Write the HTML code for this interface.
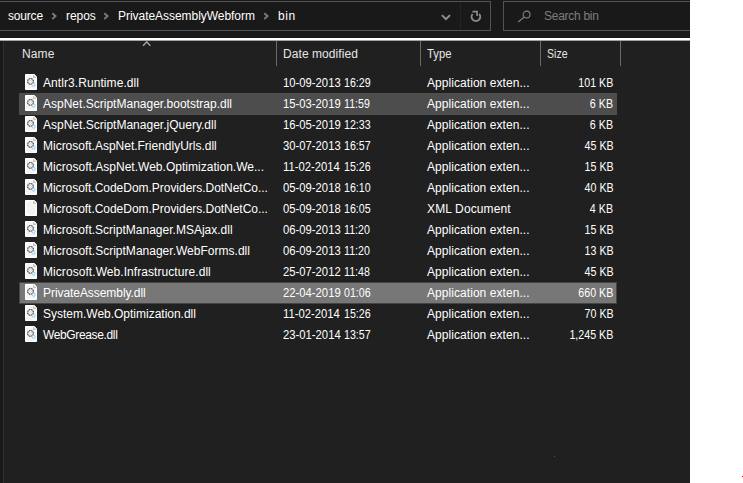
<!DOCTYPE html>
<html>
<head>
<meta charset="utf-8">
<title>bin</title>
<style>
html,body{margin:0;padding:0;}
body{width:743px;height:483px;background:#ffffff;position:relative;overflow:hidden;font-family:"Liberation Sans",sans-serif;font-size:12px;}
#win{position:absolute;left:0;top:0;width:690px;height:483px;background:#202020;overflow:hidden;}
#topbar{position:absolute;left:0;top:0;width:690px;height:38px;background:#191919;}
#whiteline{position:absolute;left:0;top:38px;width:690px;height:2px;background:#ffffff;border-bottom:1px solid #a4a4a4;}
#addr{position:absolute;left:-1px;top:1px;width:490px;height:28px;border:1px solid #525252;}
#addrdiv{position:absolute;left:460px;top:2px;width:1px;height:28px;background:#232323;}
#search{position:absolute;left:503px;top:1px;width:190px;height:28px;border:1px solid #525252;}
#lstrip{position:absolute;left:0;top:41px;width:3px;height:442px;background:#191919;}
#lstrip2{position:absolute;left:3px;top:41px;width:1px;height:442px;background:#2e2e2e;}
.sep{position:absolute;top:41px;width:1px;height:25px;background:#6a6a6a;}
.hl{position:absolute;left:19px;width:598px;height:22px;box-sizing:border-box;}
.t{position:absolute;white-space:pre;}
.ic{position:absolute;}
.dot{position:absolute;width:1px;height:1px;background:#ff0000;}
</style>
</head>
<body>
<svg width="0" height="0" style="position:absolute">
<defs>
<g id="page">
<path d="M0.5 0.5 H9.3 L11.5 2.7 V15.5 H0.5 Z" fill="#fafafa" stroke="#ffffff" stroke-width="1"/>
<path d="M1.8 1.8 H8 V4 H10.2 V14.2 H1.8 Z" fill="#f4f4f4"/>
<path d="M8.3 0.8 L11.2 3.7 H8.3 Z" fill="#d4d4d4"/><path d="M8.5 1 V3.5 H11" fill="none" stroke="#bdbdbd" stroke-width="0.8"/>
</g>
<g id="dll">
<use href="#page"/>
<circle cx="5.5" cy="7.4" r="2.85" fill="#f7f7f7" stroke="#828282" stroke-width="1"/>
<circle cx="5.5" cy="7.4" r="2.95" fill="none" stroke="#505050" stroke-width="1.1" stroke-dasharray="0.95 1.367" transform="rotate(11 5.5 7.4)"/>
<path d="M5.5 6.2 L6.7 7.4 L5.5 8.6 L4.3 7.4 Z" fill="#ffffff" stroke="#b0b0b0" stroke-width="0.5"/>
<circle cx="8.6" cy="10.7" r="1.45" fill="#f2f9fe" stroke="#b4d9f5" stroke-width="0.8"/>
<circle cx="8.6" cy="10.7" r="1.5" fill="none" stroke="#5cabe5" stroke-width="0.8" stroke-dasharray="0.6 0.578"/>
<circle cx="8.6" cy="10.7" r="0.7" fill="#ffffff"/>
</g>
<g id="xml">
<use href="#page"/>
</g>
</defs>
</svg>
<div id="win">
<div id="topbar"></div>
<div id="addr"></div>
<div id="addrdiv"></div>
<div id="search"></div>
<div id="whiteline"></div>
<div id="lstrip"></div><div id="lstrip2"></div>
<div class="sep" style="left:276px"></div>
<div class="sep" style="left:420px"></div>
<div class="sep" style="left:540px"></div>
<div class="sep" style="left:620px"></div>
<div class="hl" style="top:93px;background:#4d4d4d"></div>
<div class="hl" style="top:282px;background:#777777;border:1px solid #444444"></div>
<!-- breadcrumb chevrons -->
<svg class="ic" style="left:51.3px;top:12.4px" width="8" height="9" viewBox="0 0 8 9"><path d="M1.3 1.2 L4.5 4.1 L1.3 7" fill="none" stroke="#7c7c7c" stroke-width="1.9"/></svg>
<svg class="ic" style="left:103.2px;top:12.4px" width="8" height="9" viewBox="0 0 8 9"><path d="M1.3 1.2 L4.5 4.1 L1.3 7" fill="none" stroke="#7c7c7c" stroke-width="1.9"/></svg>
<svg class="ic" style="left:263.2px;top:12.4px" width="8" height="9" viewBox="0 0 8 9"><path d="M1.3 1.2 L4.5 4.1 L1.3 7" fill="none" stroke="#7c7c7c" stroke-width="1.9"/></svg>
<!-- dropdown chevron -->
<svg class="ic" style="left:440px;top:12px" width="12" height="10" viewBox="0 0 12 10"><path d="M1.9 3.1 L5.95 7.1 L10 3.1" fill="none" stroke="#909090" stroke-width="2"/></svg>
<!-- refresh -->
<svg class="ic" style="left:468px;top:8px" width="16" height="16" viewBox="0 0 16 16"><path d="M11.2 6.0 A4.3 4.3 0 1 1 4.6 6.0" fill="none" stroke="#8e8e8e" stroke-width="1.9"/><path d="M4.4 3.6 H9.1 V8" fill="none" stroke="#8e8e8e" stroke-width="1.6"/></svg>
<!-- search icon -->
<svg class="ic" style="left:516px;top:9px" width="16" height="15" viewBox="0 0 16 15"><circle cx="10.6" cy="5.5" r="3.4" fill="none" stroke="#808080" stroke-width="1.1"/><path d="M8.2 8 L2.2 13" stroke="#808080" stroke-width="1.1"/></svg>
<!-- sort caret -->
<svg class="ic" style="left:142px;top:40px" width="10" height="7" viewBox="0 0 10 7"><path d="M1.1 5.7 L4.7 1.8 L8.3 5.7" fill="none" stroke="#a8a8a8" stroke-width="1.3"/></svg>
<svg class="ic" style="left:25px;top:74px" width="12" height="16" viewBox="0 0 12 16"><use href="#dll"/></svg>
<svg class="ic" style="left:25px;top:95px" width="12" height="16" viewBox="0 0 12 16"><use href="#dll"/></svg>
<svg class="ic" style="left:25px;top:116px" width="12" height="16" viewBox="0 0 12 16"><use href="#dll"/></svg>
<svg class="ic" style="left:25px;top:137px" width="12" height="16" viewBox="0 0 12 16"><use href="#dll"/></svg>
<svg class="ic" style="left:25px;top:158px" width="12" height="16" viewBox="0 0 12 16"><use href="#dll"/></svg>
<svg class="ic" style="left:25px;top:179px" width="12" height="16" viewBox="0 0 12 16"><use href="#dll"/></svg>
<svg class="ic" style="left:25px;top:200px" width="12" height="16" viewBox="0 0 12 16"><use href="#xml"/></svg>
<svg class="ic" style="left:25px;top:221px" width="12" height="16" viewBox="0 0 12 16"><use href="#dll"/></svg>
<svg class="ic" style="left:25px;top:242px" width="12" height="16" viewBox="0 0 12 16"><use href="#dll"/></svg>
<svg class="ic" style="left:25px;top:263px" width="12" height="16" viewBox="0 0 12 16"><use href="#dll"/></svg>
<svg class="ic" style="left:25px;top:284px" width="12" height="16" viewBox="0 0 12 16"><use href="#dll"/></svg>
<svg class="ic" style="left:25px;top:305px" width="12" height="16" viewBox="0 0 12 16"><use href="#dll"/></svg>
<svg class="ic" style="left:25px;top:326px" width="12" height="16" viewBox="0 0 12 16"><use href="#dll"/></svg>
<span class="t" style="left:8.00px;top:6px;line-height:21px;color:#ffffff;letter-spacing:-0.186px;">source</span>
<span class="t" style="left:66.00px;top:6px;line-height:21px;color:#ffffff;letter-spacing:-0.048px;">repos</span>
<span class="t" style="left:118.00px;top:6px;line-height:21px;color:#ffffff;letter-spacing:-0.041px;">PrivateAssemblyWebform</span>
<span class="t" style="left:278.00px;top:6px;line-height:21px;color:#ffffff;letter-spacing:0.525px;">bin</span>
<span class="t" style="left:544.00px;top:6px;line-height:21px;color:#7e7e7e;letter-spacing:-0.273px;">Search bin</span>
<span class="t" style="left:22.00px;top:44px;line-height:21px;color:#e6e6e6;letter-spacing:0.139px;">Name</span>
<span class="t" style="left:283.00px;top:44px;line-height:21px;color:#e6e6e6;letter-spacing:0.071px;">Date modified</span>
<span class="t" style="left:427.00px;top:44px;line-height:21px;color:#e6e6e6;transform:scaleX(0.9379);transform-origin:0 0;">Type</span>
<span class="t" style="left:547.00px;top:44px;line-height:21px;color:#e6e6e6;transform:scaleX(0.8794);transform-origin:0 0;">Size</span>
<span class="t" style="left:43.00px;top:73px;line-height:21px;color:#ffffff;letter-spacing:0.074px;">Antlr3.Runtime.dll</span>
<span class="t" style="left:283.00px;top:73px;line-height:21px;color:#ffffff;transform:scaleX(0.9396);transform-origin:0 0;">10-09-2013</span>
<span class="t" style="left:344.00px;top:73px;line-height:21px;color:#ffffff;transform:scaleX(0.8864);transform-origin:0 0;">16:29</span>
<span class="t" style="left:427.00px;top:73px;line-height:21px;color:#ffffff;letter-spacing:0.059px;">Application exten...</span>
<span class="t" style="right:76.7px;top:73px;line-height:21px;color:#ffffff;transform:scaleX(0.89);transform-origin:100% 0;">101 KB</span>
<span class="t" style="left:43.00px;top:94px;line-height:21px;color:#ffffff;letter-spacing:0.007px;">AspNet.ScriptManager.bootstrap.dll</span>
<span class="t" style="left:283.00px;top:94px;line-height:21px;color:#ffffff;transform:scaleX(0.9396);transform-origin:0 0;">15-03-2019</span>
<span class="t" style="left:344.00px;top:94px;line-height:21px;color:#ffffff;transform:scaleX(0.8864);transform-origin:0 0;">11:59</span>
<span class="t" style="left:427.00px;top:94px;line-height:21px;color:#ffffff;letter-spacing:0.059px;">Application exten...</span>
<span class="t" style="right:76.7px;top:94px;line-height:21px;color:#ffffff;transform:scaleX(0.89);transform-origin:100% 0;">6 KB</span>
<span class="t" style="left:43.00px;top:115px;line-height:21px;color:#ffffff;letter-spacing:0.006px;">AspNet.ScriptManager.jQuery.dll</span>
<span class="t" style="left:283.00px;top:115px;line-height:21px;color:#ffffff;transform:scaleX(0.9396);transform-origin:0 0;">16-05-2019</span>
<span class="t" style="left:344.00px;top:115px;line-height:21px;color:#ffffff;transform:scaleX(0.8864);transform-origin:0 0;">12:33</span>
<span class="t" style="left:427.00px;top:115px;line-height:21px;color:#ffffff;letter-spacing:0.059px;">Application exten...</span>
<span class="t" style="right:76.7px;top:115px;line-height:21px;color:#ffffff;transform:scaleX(0.89);transform-origin:100% 0;">6 KB</span>
<span class="t" style="left:43.00px;top:136px;line-height:21px;color:#ffffff;letter-spacing:-0.009px;">Microsoft.AspNet.FriendlyUrls.dll</span>
<span class="t" style="left:283.00px;top:136px;line-height:21px;color:#ffffff;transform:scaleX(0.9396);transform-origin:0 0;">30-07-2013</span>
<span class="t" style="left:344.00px;top:136px;line-height:21px;color:#ffffff;transform:scaleX(0.8864);transform-origin:0 0;">16:57</span>
<span class="t" style="left:427.00px;top:136px;line-height:21px;color:#ffffff;letter-spacing:0.059px;">Application exten...</span>
<span class="t" style="right:76.7px;top:136px;line-height:21px;color:#ffffff;transform:scaleX(0.89);transform-origin:100% 0;">45 KB</span>
<span class="t" style="left:43.00px;top:157px;line-height:21px;color:#ffffff;letter-spacing:0.020px;">Microsoft.AspNet.Web.Optimization.We...</span>
<span class="t" style="left:283.00px;top:157px;line-height:21px;color:#ffffff;transform:scaleX(0.9396);transform-origin:0 0;">11-02-2014</span>
<span class="t" style="left:344.00px;top:157px;line-height:21px;color:#ffffff;transform:scaleX(0.8864);transform-origin:0 0;">15:26</span>
<span class="t" style="left:427.00px;top:157px;line-height:21px;color:#ffffff;letter-spacing:0.059px;">Application exten...</span>
<span class="t" style="right:76.7px;top:157px;line-height:21px;color:#ffffff;transform:scaleX(0.89);transform-origin:100% 0;">15 KB</span>
<span class="t" style="left:43.00px;top:178px;line-height:21px;color:#ffffff;letter-spacing:-0.031px;">Microsoft.CodeDom.Providers.DotNetCo...</span>
<span class="t" style="left:283.00px;top:178px;line-height:21px;color:#ffffff;transform:scaleX(0.9396);transform-origin:0 0;">05-09-2018</span>
<span class="t" style="left:344.00px;top:178px;line-height:21px;color:#ffffff;transform:scaleX(0.8864);transform-origin:0 0;">16:10</span>
<span class="t" style="left:427.00px;top:178px;line-height:21px;color:#ffffff;letter-spacing:0.059px;">Application exten...</span>
<span class="t" style="right:76.7px;top:178px;line-height:21px;color:#ffffff;transform:scaleX(0.89);transform-origin:100% 0;">40 KB</span>
<span class="t" style="left:43.00px;top:199px;line-height:21px;color:#ffffff;letter-spacing:-0.031px;">Microsoft.CodeDom.Providers.DotNetCo...</span>
<span class="t" style="left:283.00px;top:199px;line-height:21px;color:#ffffff;transform:scaleX(0.9396);transform-origin:0 0;">05-09-2018</span>
<span class="t" style="left:344.00px;top:199px;line-height:21px;color:#ffffff;transform:scaleX(0.8864);transform-origin:0 0;">16:05</span>
<span class="t" style="left:427.00px;top:199px;line-height:21px;color:#ffffff;letter-spacing:0.130px;">XML Document</span>
<span class="t" style="right:76.7px;top:199px;line-height:21px;color:#ffffff;transform:scaleX(0.89);transform-origin:100% 0;">4 KB</span>
<span class="t" style="left:43.00px;top:220px;line-height:21px;color:#ffffff;letter-spacing:0.007px;">Microsoft.ScriptManager.MSAjax.dll</span>
<span class="t" style="left:283.00px;top:220px;line-height:21px;color:#ffffff;transform:scaleX(0.9396);transform-origin:0 0;">06-09-2013</span>
<span class="t" style="left:344.00px;top:220px;line-height:21px;color:#ffffff;transform:scaleX(0.8864);transform-origin:0 0;">11:20</span>
<span class="t" style="left:427.00px;top:220px;line-height:21px;color:#ffffff;letter-spacing:0.059px;">Application exten...</span>
<span class="t" style="right:76.7px;top:220px;line-height:21px;color:#ffffff;transform:scaleX(0.89);transform-origin:100% 0;">15 KB</span>
<span class="t" style="left:43.00px;top:241px;line-height:21px;color:#ffffff;letter-spacing:0.012px;">Microsoft.ScriptManager.WebForms.dll</span>
<span class="t" style="left:283.00px;top:241px;line-height:21px;color:#ffffff;transform:scaleX(0.9396);transform-origin:0 0;">06-09-2013</span>
<span class="t" style="left:344.00px;top:241px;line-height:21px;color:#ffffff;transform:scaleX(0.8864);transform-origin:0 0;">11:20</span>
<span class="t" style="left:427.00px;top:241px;line-height:21px;color:#ffffff;letter-spacing:0.059px;">Application exten...</span>
<span class="t" style="right:76.7px;top:241px;line-height:21px;color:#ffffff;transform:scaleX(0.89);transform-origin:100% 0;">13 KB</span>
<span class="t" style="left:43.00px;top:262px;line-height:21px;color:#ffffff;letter-spacing:0.063px;">Microsoft.Web.Infrastructure.dll</span>
<span class="t" style="left:283.00px;top:262px;line-height:21px;color:#ffffff;transform:scaleX(0.9396);transform-origin:0 0;">25-07-2012</span>
<span class="t" style="left:344.00px;top:262px;line-height:21px;color:#ffffff;transform:scaleX(0.8864);transform-origin:0 0;">11:48</span>
<span class="t" style="left:427.00px;top:262px;line-height:21px;color:#ffffff;letter-spacing:0.059px;">Application exten...</span>
<span class="t" style="right:76.7px;top:262px;line-height:21px;color:#ffffff;transform:scaleX(0.89);transform-origin:100% 0;">45 KB</span>
<span class="t" style="left:43.00px;top:283px;line-height:21px;color:#ffffff;letter-spacing:-0.061px;">PrivateAssembly.dll</span>
<span class="t" style="left:283.00px;top:283px;line-height:21px;color:#ffffff;transform:scaleX(0.9396);transform-origin:0 0;">22-04-2019</span>
<span class="t" style="left:344.00px;top:283px;line-height:21px;color:#ffffff;transform:scaleX(0.8864);transform-origin:0 0;">01:06</span>
<span class="t" style="left:427.00px;top:283px;line-height:21px;color:#ffffff;letter-spacing:0.059px;">Application exten...</span>
<span class="t" style="right:76.7px;top:283px;line-height:21px;color:#ffffff;transform:scaleX(0.89);transform-origin:100% 0;">660 KB</span>
<span class="t" style="left:43.00px;top:304px;line-height:21px;color:#ffffff;letter-spacing:-0.009px;">System.Web.Optimization.dll</span>
<span class="t" style="left:283.00px;top:304px;line-height:21px;color:#ffffff;transform:scaleX(0.9396);transform-origin:0 0;">11-02-2014</span>
<span class="t" style="left:344.00px;top:304px;line-height:21px;color:#ffffff;transform:scaleX(0.8864);transform-origin:0 0;">15:26</span>
<span class="t" style="left:427.00px;top:304px;line-height:21px;color:#ffffff;letter-spacing:0.059px;">Application exten...</span>
<span class="t" style="right:76.7px;top:304px;line-height:21px;color:#ffffff;transform:scaleX(0.89);transform-origin:100% 0;">70 KB</span>
<span class="t" style="left:43.00px;top:325px;line-height:21px;color:#ffffff;letter-spacing:-0.361px;">WebGrease.dll</span>
<span class="t" style="left:283.00px;top:325px;line-height:21px;color:#ffffff;transform:scaleX(0.9396);transform-origin:0 0;">23-01-2014</span>
<span class="t" style="left:344.00px;top:325px;line-height:21px;color:#ffffff;transform:scaleX(0.8864);transform-origin:0 0;">13:57</span>
<span class="t" style="left:427.00px;top:325px;line-height:21px;color:#ffffff;letter-spacing:0.059px;">Application exten...</span>
<span class="t" style="right:76.7px;top:325px;line-height:21px;color:#ffffff;transform:scaleX(0.89);transform-origin:100% 0;">1,245 KB</span>
<div class="dot" style="left:554px;top:456px"></div>
</div>
<div class="dot" style="left:742px;top:476px"></div>
</body>
</html>
